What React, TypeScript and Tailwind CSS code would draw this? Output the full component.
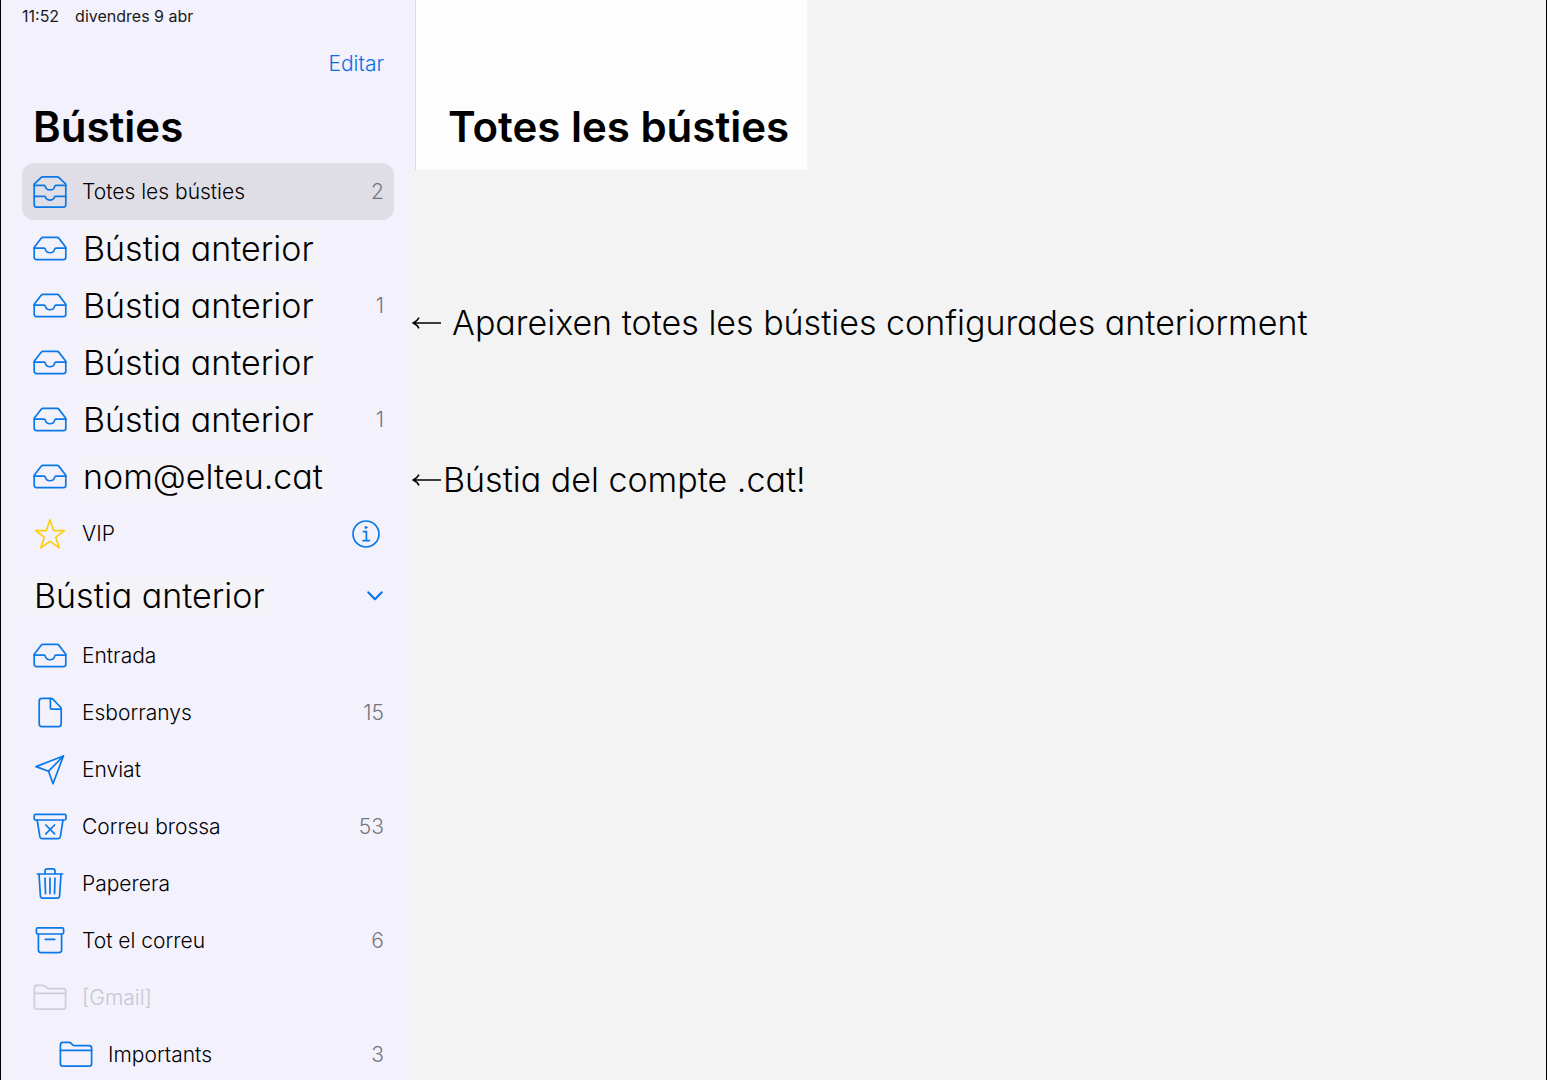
import type { ReactNode } from "react";

type IconName = "trays" | "tray" | "star" | "doc" | "plane" | "junk" | "trash" | "archive" | "folder";

const icons: Record<IconName, ReactNode> = {
  trays: (
    <>
      <path d="M1.2 9.2 8 2.6Q8.8 1.8 10 1.8H24Q25.2 1.8 26 2.6L32.8 9.2V30Q32.8 32.2 30.4 32.2H3.6Q1.2 32.2 1.2 30Z" />
      <path d="M1.2 10.4H11Q12.2 10.4 12.4 11.6A4.7 4.2 0 0 0 21.6 11.6Q21.8 10.4 23 10.4H32.8" />
      <path d="M1.2 21.4H11.4Q12.4 21.4 12.6 22.2A4.6 4 0 0 0 21.4 22.2Q21.6 21.4 22.6 21.4H32.8" />
    </>
  ),
  tray: (
    <>
      <path d="M1.2 15.2 8 6.4Q8.8 5.4 10 5.4H24Q25.2 5.4 26 6.4L32.8 15.2V25.2Q32.8 27.6 30.4 27.6H3.6Q1.2 27.6 1.2 25.2Z" />
      <path d="M1.2 16.2H11Q12.2 16.2 12.4 17.4A4.7 4.2 0 0 0 21.6 17.4Q21.8 16.2 23 16.2H32.8" />
    </>
  ),
  star: <path d="M17 2.8 20.6 13.6H31.4L22.8 20.2 26.2 30.8 17 24.4 7.8 30.8 11.2 20.2 2.6 13.6H13.4Z" />,
  doc: (
    <>
      <path d="M9 2.4H18Q19 2.4 19.8 3.2L27.4 11Q28.2 11.8 28.2 13V28Q28.2 30.6 25.6 30.6H8.8Q6.2 30.6 6.2 28V5Q6.2 2.4 9 2.4Z" />
      <path d="M17.4 2.6V11.4Q17.4 13.2 19.2 13.2H28" />
    </>
  ),
  plane: (
    <>
      <path d="M30.4 3 3 13.6 15.6 18.2 20 30.8Z" />
      <path d="M15.6 18.2 30.4 3" />
    </>
  ),
  junk: (
    <>
      <rect x="1.2" y="4.4" width="31.8" height="5.6" rx="1.4" />
      <path d="M4.2 10 6.8 26.4Q7.2 28.6 9.4 28.6H24.8Q27 28.6 27.4 26.4L30 10" />
      <path d="M12.8 15 21.6 23.8M21.6 15 12.8 23.8" />
    </>
  ),
  trash: (
    <>
      <path d="M4.4 7H29.6M12 7V4Q12 1.8 14.2 1.8H19.8Q22 1.8 22 4V7" />
      <path d="M6 7 7.4 29Q7.6 31.2 9.8 31.2H24.2Q26.4 31.2 26.6 29L28 7" />
      <path d="M12 11.2 12.5 26.6M17 11.2V26.6M22 11.2 21.5 26.6" />
    </>
  ),
  archive: (
    <>
      <rect x="3.4" y="3.8" width="27.2" height="6.2" rx="1.4" />
      <path d="M5.4 10V26Q5.4 28.6 8 28.6H26Q28.6 28.6 28.6 26V10" />
      <path d="M12.2 15.3H21.8" />
    </>
  ),
  folder: (
    <>
      <path d="M1.4 7V25.8Q1.4 28.2 3.8 28.2H30.2Q32.6 28.2 32.6 25.8V10Q32.6 7.6 30.2 7.6H15.6Q14.4 7.6 13.4 6.6L12.2 5.4Q11.2 4.4 9.8 4.4H4Q1.4 4.4 1.4 7Z" />
      <path d="M1.4 12.4H32.6" />
    </>
  ),
};

function Icon({ name, className }: { name: IconName; className: string }) {
  return (
    <svg
      viewBox="0 0 34 33"
      className={`w-[34px] h-[33px] shrink-0 ${className}`}
      fill="none"
      stroke="currentColor"
      strokeWidth="1.7"
      strokeLinecap="round"
      strokeLinejoin="round"
      aria-hidden="true"
    >
      {icons[name]}
    </svg>
  );
}

type Item = {
  icon: IconName;
  label: string;
  count?: number;
  large?: boolean;
  selected?: boolean;
  muted?: boolean;
  nested?: boolean;
};

const mailboxes: Item[] = [
  { icon: "trays", label: "Totes les bústies", count: 2, selected: true },
  { icon: "tray", label: "Bústia anterior", large: true },
  { icon: "tray", label: "Bústia anterior", large: true, count: 1 },
  { icon: "tray", label: "Bústia anterior", large: true },
  { icon: "tray", label: "Bústia anterior", large: true, count: 1 },
  { icon: "tray", label: "nom@elteu.cat", large: true },
];

const folders: Item[] = [
  { icon: "tray", label: "Entrada" },
  { icon: "doc", label: "Esborranys", count: 15 },
  { icon: "plane", label: "Enviat" },
  { icon: "junk", label: "Correu brossa", count: 53 },
  { icon: "trash", label: "Paperera" },
  { icon: "archive", label: "Tot el correu", count: 6 },
  { icon: "folder", label: "[Gmail]", muted: true },
  { icon: "folder", label: "Importants", count: 3, nested: true },
];

const largeText = "text-[34px] leading-10 font-light [font-feature-settings:'cv11'] whitespace-nowrap text-black";
const rowText = "text-[21px] leading-7 font-light";
const titleText = "text-[42px] leading-[62px] font-semibold whitespace-nowrap text-black";

function Row({ item }: { item: Item }) {
  return (
    <li>
      <a
        href="#"
        className={`flex items-center h-[57px] pr-2.5 rounded-xl ${item.nested ? "pl-[37px]" : "pl-[11px]"} ${
          item.selected ? "bg-[#dfdde6]" : ""
        } ${item.muted ? "text-[#c8c6cf]" : "text-black"}`}
      >
        <Icon name={item.icon} className={item.muted ? "text-[#cfcdd6]" : "text-[#0a78e6]"} />
        {item.large ? (
          <span className={`ml-3 px-1 bg-[#f4f3f7] ${largeText}`}>{item.label}</span>
        ) : (
          <span className={`ml-[15px] ${rowText}`}>{item.label}</span>
        )}
        {item.count && <span className={`ml-auto text-[#77767e] ${rowText}`}>{item.count}</span>}
      </a>
    </li>
  );
}

function Sidebar() {
  return (
    <aside className="w-[411px] shrink-0 bg-[#f3f1fc] pl-[21px] pr-[18px]">
      <div className="flex gap-4 h-[31px] items-center text-base leading-5 text-[#1a1a1c]">
        <span>11:52</span>
        <span>divendres 9 abr</span>
      </div>
      <div className="flex justify-end h-[65px] items-center pr-2.5">
        <button className={`text-[#0a6fe6] ${rowText}`}>Editar</button>
      </div>
      <h1 className={`h-[67px] pl-[11px] ${titleText}`}>Bústies</h1>
      <ul>
        {mailboxes.map((item, i) => (
          <Row key={i} item={item} />
        ))}
        <li className="flex items-center h-[57px] pl-[11px] pr-3.5">
          <a href="#" className="flex flex-1 items-center text-black">
            <Icon name="star" className="text-[#fbcf12]" />
            <span className={`ml-[15px] ${rowText}`}>VIP</span>
          </a>
          <button aria-label="Info" className="text-[#0a78e6]">
            <svg viewBox="0 0 28 28" className="size-7" fill="none" stroke="currentColor" strokeWidth="1.7" strokeLinecap="round">
              <circle cx="14" cy="14" r="13" />
              <path d="M11.4 11.6H14.4V20.4M11 20.6H17.4" />
              <circle cx="14" cy="7.4" r="1" fill="currentColor" strokeWidth="1" />
            </svg>
          </button>
        </li>
      </ul>
      <button className="flex w-full items-center justify-between h-[65px] pt-0.5 pl-2 pr-[11px]">
        <span className={`px-1 bg-[#f4f3f7] ${largeText}`}>Bústia anterior</span>
        <svg viewBox="0 0 16 10" className="w-4 h-2.5" fill="none" stroke="#0a78e6" strokeWidth="2.2" strokeLinecap="round" strokeLinejoin="round">
          <path d="M1.4 1.4 8 8.2 14.6 1.4" />
        </svg>
      </button>
      <ul>
        {folders.map((item) => (
          <Row key={item.label} item={item} />
        ))}
      </ul>
    </aside>
  );
}

function Arrow() {
  return (
    <svg viewBox="0 0 30 14" className="w-[30px] h-3.5 shrink-0" fill="none" stroke="black" strokeWidth="1.6" aria-hidden="true">
      <path d="M1.5 7H29M7 1.6Q5 5.4 1.2 7 5 8.6 7 12.4" />
    </svg>
  );
}

export default function App() {
  return (
    <div className="flex h-screen overflow-hidden bg-[#f3f3f3] border-x border-black font-['Inter',sans-serif]">
      <Sidebar />
      <main className="flex-1">
        <div className="flex">
          <div className="w-1 bg-[#f3f1fc] border-r border-[#dcdae6]" />
          <header className="h-[170px] bg-[#fefdfe] pt-24 pl-8 pr-[18px]">
            <h2 className={titleText}>Totes les bústies</h2>
          </header>
        </div>
        <p className={`flex items-center gap-2.5 mt-[133px] ${largeText}`}>
          <Arrow />
          Apareixen totes les bústies configurades anteriorment
        </p>
        <p className={`flex items-center gap-px mt-[117px] ${largeText}`}>
          <Arrow />
          Bústia del compte .cat!
        </p>
      </main>
    </div>
  );
}
